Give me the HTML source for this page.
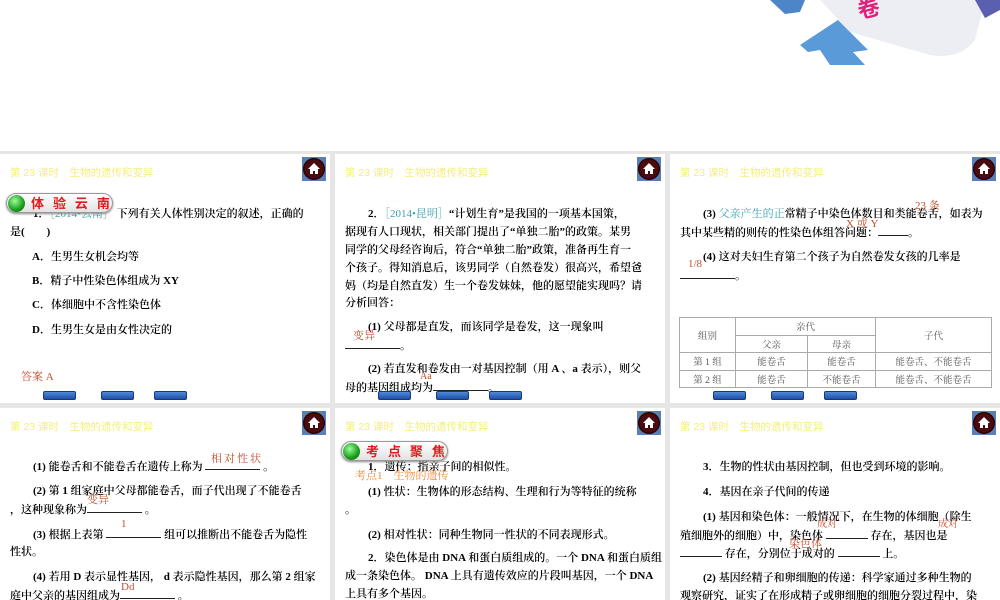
<!DOCTYPE html>
<html><head><meta charset="utf-8"><style>
*{margin:0;padding:0;box-sizing:border-box}
body{width:1000px;height:600px;background:#e6e6e6;position:relative;overflow:hidden;font-family:"Liberation Serif","Noto Serif CJK SC",serif;color:#000}
.top{position:absolute;left:0;top:0;width:1000px;height:151px;background:#fff}
.s{position:absolute;background:#fff;overflow:hidden}
.ttl{position:absolute;left:10px;top:11px;font:10.5px "Liberation Sans","Noto Sans CJK SC",sans-serif;color:#f3ef7a;white-space:nowrap}
.home{position:absolute;right:4px;top:3px;width:24px;height:24px;background:#5a7fb5}
.home:after{content:"";position:absolute;left:1px;top:1px;width:22px;height:22px;border-radius:50%;background:#4a0c10;box-shadow:inset 0 0 0 1.5px #2a0507}
.home svg{position:absolute;left:5px;top:5px;z-index:2}
.t{position:absolute;font-size:11px;line-height:16px;white-space:nowrap;font-weight:600}
.r{color:#c0502e;font-weight:400}
.bl{display:inline-block;border-bottom:1px solid #222;height:12px;vertical-align:baseline}
.nav{position:absolute;width:33px;height:9px;border-radius:2px;background:linear-gradient(#4f8ad8,#1e4fa8);border:1px solid #16397a}
.badge{position:absolute;height:20px;border-radius:10px;background:linear-gradient(#fff,#e2e2e2);border:1px solid #999;box-shadow:0 1px 2px #888}
.badge i{position:absolute;left:1px;top:1px;width:17px;height:17px;border-radius:50%;background:radial-gradient(circle at 40% 35%,#9f9,#1a9a1a 60%,#0b6b0b)}
.badge b{position:absolute;left:24px;top:0;font:bold 13px "Noto Sans CJK SC",sans-serif;color:#e01b1b;letter-spacing:3px;line-height:18px;white-space:nowrap}
table{position:absolute;border-collapse:collapse;font-size:9.5px;color:#555;text-align:center}
td{border:1px solid #aaa;height:17.5px}
</style></head><body>
<div class="top">
 <svg width="1000" height="150" style="position:absolute;left:0;top:0">
  <polygon points="770,0 805,0 800,12 785,14" fill="#4c86c8"/>
  <polygon points="800,45 838,20 868,50 853,52 865,65 830,65 820,50 808,52" fill="#5b9ad8"/>
  <path d="M820,0 L985,0 L975,40 Q960,60 930,55 L850,32 Z" fill="#eceef4"/>
  <text x="858" y="16" font-size="22" font-weight="bold" fill="#e0207a" font-family="Noto Sans CJK SC" transform="rotate(-15 870 10)">卷</text>
  <path d="M975,0 L1000,0 L1000,10 L985,18 Z" fill="#5a5fb0"/>
 </svg>
</div>

<!-- slide 1 -->
<div class="s" style="left:0;top:154px;width:330px;height:249px">
 <div class="ttl">第 23 课时　生物的遗传和变异</div>
 <div class="home"><svg width="14" height="13" viewBox="0 0 14 13"><path d="M7 1 L1 7 H3 V12 H6 V9 H8 V12 H11 V7 H13 Z" fill="#fff"/></svg></div>
 <div class="t" style="left:33px;top:52px">1．<span style="color:#3aa0b0;font-weight:400">［2014•云南］</span> 下列有关人体性别决定的叙述，正确的</div>
 <div class="badge" style="left:6px;top:39px;width:107px"><i></i><b>体 验 云 南</b></div>
 <div class="t" style="left:10px;top:70px">是(　　)</div>
 <div class="t" style="left:32px;top:95px">A．生男生女机会均等</div>
 <div class="t" style="left:32px;top:119px">B．精子中性染色体组成为 XY</div>
 <div class="t" style="left:32px;top:143px">C．体细胞中不含性染色体</div>
 <div class="t" style="left:32px;top:168px">D．生男生女是由女性决定的</div>
 <div class="t r" style="left:21px;top:215px">答案 A</div>
 <div class="nav" style="left:43px;top:237px"></div><div class="nav" style="left:101px;top:237px"></div><div class="nav" style="left:154px;top:237px"></div>
</div>

<!-- slide 2 -->
<div class="s" style="left:335px;top:154px;width:330px;height:249px">
 <div class="ttl">第 23 课时　生物的遗传和变异</div>
 <div class="home"><svg width="14" height="13" viewBox="0 0 14 13"><path d="M7 1 L1 7 H3 V12 H6 V9 H8 V12 H11 V7 H13 Z" fill="#fff"/></svg></div>
 <div class="t" style="left:33px;top:52px">2．<span style="color:#3aa0b0;font-weight:400">［2014•昆明］</span>“计划生育”是我国的一项基本国策，</div>
 <div class="t" style="left:10px;top:70px">据现有人口现状，相关部门提出了“单独二胎”的政策。某男</div>
 <div class="t" style="left:10px;top:88px">同学的父母经咨询后，符合“单独二胎”政策，准备再生育一</div>
 <div class="t" style="left:10px;top:106px">个孩子。得知消息后，该男同学（自然卷发）很高兴，希望爸</div>
 <div class="t" style="left:10px;top:124px">妈（均是自然直发）生一个卷发妹妹，他的愿望能实现吗？请</div>
 <div class="t" style="left:10px;top:141px">分析回答：</div>
 <div class="t" style="left:33px;top:165px">(1) 父母都是直发，而该同学是卷发，这一现象叫</div>
 <div class="t r" style="left:18px;top:174px">变异</div>
 <div class="t" style="left:10px;top:183px"><span class="bl" style="width:55px"></span>。</div>
 <div class="t" style="left:33px;top:207px">(2) 若直发和卷发由一对基因控制（用 A 、a 表示），则父</div>
 <div class="t" style="left:10px;top:225px">母的基因组成均为<span class="bl" style="width:55px"></span>。</div>
 <div class="t r" style="left:85px;top:215px;font-size:10px">Aa</div>
 <div class="nav" style="left:43px;top:237px"></div><div class="nav" style="left:101px;top:237px"></div><div class="nav" style="left:154px;top:237px"></div>
</div>

<!-- slide 3 -->
<div class="s" style="left:670px;top:154px;width:330px;height:249px">
 <div class="ttl">第 23 课时　生物的遗传和变异</div>
 <div class="home"><svg width="14" height="13" viewBox="0 0 14 13"><path d="M7 1 L1 7 H3 V12 H6 V9 H8 V12 H11 V7 H13 Z" fill="#fff"/></svg></div>
 <div class="t" style="left:33px;top:52px">(3) <span style="color:#3aa0b0;font-weight:400">父亲产生的正</span>常精子中染色体数目和类能卷舌，如表为</div>
 <div class="t" style="left:10px;top:70px">其中某些精的则传的性染色体组答问题：<span class="bl" style="width:30px"></span>。</div>
 <div class="t r" style="left:245px;top:44px">23 条</div>
 <div class="t r" style="left:176px;top:62px">X 或 Y</div>
 <div class="t" style="left:33px;top:95px">(4) 这对夫妇生育第二个孩子为自然卷发女孩的几率是</div>
 <div class="t r" style="left:18px;top:102px">1/8</div>
 <div class="t" style="left:10px;top:113px"><span class="bl" style="width:55px"></span>。</div>
 <table style="left:9px;top:163px;width:313px">
  <tr><td rowspan="2" style="width:56px">组别</td><td colspan="2">亲代</td><td rowspan="2">子代</td></tr>
  <tr><td style="width:72px">父亲</td><td style="width:68px">母亲</td></tr>
  <tr><td>第 1 组</td><td>能卷舌</td><td>能卷舌</td><td>能卷舌、不能卷舌</td></tr>
  <tr><td>第 2 组</td><td>能卷舌</td><td>不能卷舌</td><td>能卷舌、不能卷舌</td></tr>
 </table>
 <div class="nav" style="left:43px;top:237px"></div><div class="nav" style="left:101px;top:237px"></div><div class="nav" style="left:154px;top:237px"></div>
</div>

<!-- slide 4 -->
<div class="s" style="left:0;top:408px;width:330px;height:192px">
 <div class="ttl">第 23 课时　生物的遗传和变异</div>
 <div class="home"><svg width="14" height="13" viewBox="0 0 14 13"><path d="M7 1 L1 7 H3 V12 H6 V9 H8 V12 H11 V7 H13 Z" fill="#fff"/></svg></div>
 <div class="t" style="left:33px;top:50px">(1) 能卷舌和不能卷舌在遗传上称为 <span class="bl" style="width:55px"></span> 。</div>
 <div class="t r" style="left:211px;top:43px;letter-spacing:2px">相对性状</div>
 <div class="t" style="left:33px;top:75px">(2) 第 1 组家庭中父母都能卷舌，而子代出现了不能卷舌</div>
 <div class="t r" style="left:87px;top:84px">变异</div>
 <div class="t" style="left:10px;top:93px">，这种现象称为<span class="bl" style="width:55px"></span> 。</div>
 <div class="t" style="left:33px;top:118px">(3) 根据上表第 <span class="bl" style="width:55px"></span> 组可以推断出不能卷舌为隐性</div>
 <div class="t r" style="left:121px;top:108px">1</div>
 <div class="t" style="left:10px;top:136px">性状。</div>
 <div class="t" style="left:33px;top:161px">(4) 若用 D 表示显性基因， d 表示隐性基因，那么第 2 组家</div>
 <div class="t r" style="left:121px;top:171px">Dd</div>
 <div class="t" style="left:10px;top:179px">庭中父亲的基因组成为<span class="bl" style="width:55px"></span> 。</div>
</div>

<!-- slide 5 -->
<div class="s" style="left:335px;top:408px;width:330px;height:192px">
 <div class="ttl">第 23 课时　生物的遗传和变异</div>
 <div class="home"><svg width="14" height="13" viewBox="0 0 14 13"><path d="M7 1 L1 7 H3 V12 H6 V9 H8 V12 H11 V7 H13 Z" fill="#fff"/></svg></div>
 <div class="t" style="left:33px;top:51px">1．遗传：指亲子间的相似性。</div>
 <div class="badge" style="left:6px;top:33px;width:107px"><i></i><b>考 点 聚 焦</b></div>
 <div class="t" style="left:20px;top:60px;color:#f08a3a;font-weight:400">考点1　生物的遗传</div>
 <div class="t" style="left:33px;top:76px">(1) 性状：生物体的形态结构、生理和行为等特征的统称</div>
 <div class="t" style="left:10px;top:94px">。</div>
 <div class="t" style="left:33px;top:119px">(2) 相对性状：同种生物同一性状的不同表现形式。</div>
 <div class="t" style="left:33px;top:142px">2．染色体是由 DNA 和蛋白质组成的。一个 DNA 和蛋白质组</div>
 <div class="t" style="left:10px;top:160px">成一条染色体。 DNA 上具有遗传效应的片段叫基因，一个 DNA</div>
 <div class="t" style="left:10px;top:178px">上具有多个基因。</div>
</div>

<!-- slide 6 -->
<div class="s" style="left:670px;top:408px;width:330px;height:192px">
 <div class="ttl">第 23 课时　生物的遗传和变异</div>
 <div class="home"><svg width="14" height="13" viewBox="0 0 14 13"><path d="M7 1 L1 7 H3 V12 H6 V9 H8 V12 H11 V7 H13 Z" fill="#fff"/></svg></div>
 <div class="t" style="left:33px;top:51px">3．生物的性状由基因控制，但也受到环境的影响。</div>
 <div class="t" style="left:33px;top:76px">4．基因在亲子代间的传递</div>
 <div class="t" style="left:33px;top:101px">(1) 基因和染色体：一般情况下，在生物的体细胞（除生</div>
 <div class="t r" style="left:147px;top:109px;font-size:10px">成对</div>
 <div class="t r" style="left:268px;top:109px;font-size:10px">成对</div>
 <div class="t" style="left:10px;top:119px">殖细胞外的细胞）中，染色体 <span class="bl" style="width:42px"></span> 存在，基因也是</div>
 <div class="t r" style="left:119px;top:128px">染色体</div>
 <div class="t" style="left:10px;top:137px"><span class="bl" style="width:42px"></span> 存在，分别位于成对的 <span class="bl" style="width:42px"></span> 上。</div>
 <div class="t" style="left:33px;top:162px">(2) 基因经精子和卵细胞的传递：科学家通过多种生物的</div>
 <div class="t" style="left:10px;top:180px">观察研究，证实了在形成精子或卵细胞的细胞分裂过程中，染</div>
</div>
</body></html>
